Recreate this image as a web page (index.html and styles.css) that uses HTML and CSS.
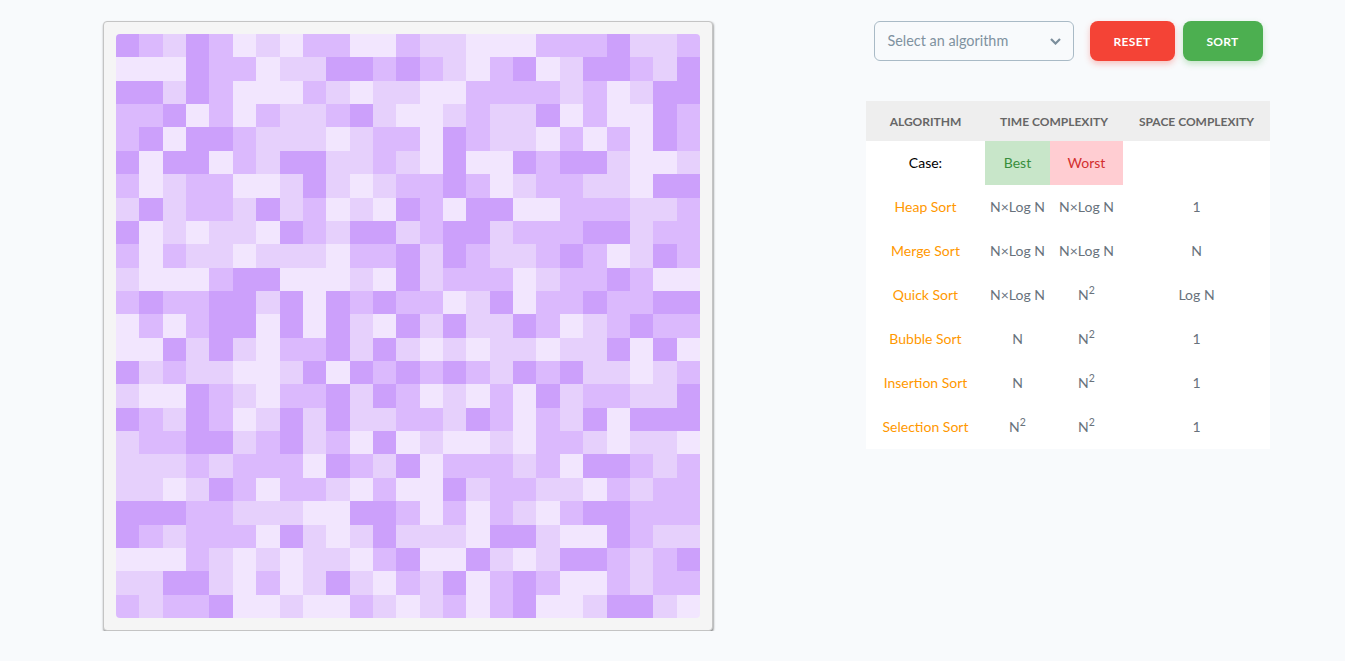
FILE: index.html
```html
<!DOCTYPE html>
<html lang="en">
<head>
  <meta charset="UTF-8" />
  <meta name="viewport" content="width=device-width, initial-scale=1.0" />
  <title>Sorting Visualizer</title>
  <link rel="stylesheet" href="styles.css">
</head>
<body>
  <div class="page">
    <div class="board">
      <div class="grid" id="grid"></div>
    </div>

    <div class="side">
      <div class="controls">
        <div class="select">
          <span>Select an algorithm</span>
          <svg class="select-arrow" width="11" height="7" viewBox="0 0 11 7" fill="none">
            <path d="M1 1 L5.5 5.5 L10 1" stroke="#7b8e9c" stroke-width="2.2" />
          </svg>
        </div>
        <button class="btn btn-reset" type="button">Reset</button>
        <button class="btn btn-sort" type="button">Sort</button>
      </div>

      <table class="info">
        <colgroup>
          <col class="col-name">
          <col class="col-best">
          <col class="col-worst">
          <col class="col-space">
        </colgroup>
        <thead>
          <tr>
            <th>Algorithm</th>
            <th colspan="2">Time Complexity</th>
            <th>Space Complexity</th>
          </tr>
        </thead>
        <tbody>
          <tr>
            <td class="case">Case:</td>
            <td class="best">Best</td>
            <td class="worst">Worst</td>
            <td></td>
          </tr>
          <tr>
            <td class="name">Heap Sort</td>
            <td>N×Log N</td>
            <td>N×Log N</td>
            <td>1</td>
          </tr>
          <tr>
            <td class="name">Merge Sort</td>
            <td>N×Log N</td>
            <td>N×Log N</td>
            <td>N</td>
          </tr>
          <tr>
            <td class="name">Quick Sort</td>
            <td>N×Log N</td>
            <td>N<sup>2</sup></td>
            <td>Log N</td>
          </tr>
          <tr>
            <td class="name">Bubble Sort</td>
            <td>N</td>
            <td>N<sup>2</sup></td>
            <td>1</td>
          </tr>
          <tr>
            <td class="name">Insertion Sort</td>
            <td>N</td>
            <td>N<sup>2</sup></td>
            <td>1</td>
          </tr>
          <tr>
            <td class="name">Selection Sort</td>
            <td>N<sup>2</sup></td>
            <td>N<sup>2</sup></td>
            <td>1</td>
          </tr>
        </tbody>
      </table>
    </div>
  </div>

  <script src="script.js"></script>
</body>
</html>
```

FILE: styles.css
```css
body {
  font-family: 'Lato', sans-serif;
  background-color: #f8fafc;
  margin: 0;
}
.page {
  display: flex;
  justify-content: space-between;
  align-items: flex-start;
  padding: 21px 75px 0 103px;
}
.board {
  background-color: #f5f5f5;
  border: 1px solid #c4c4c4;
  border-radius: 4px;
  box-shadow: 1px 1px 2px rgba(0, 0, 0, 0.25), 0 2px 2px rgba(0, 0, 0, 0.25);
  padding: 12px;
}
.grid {
  display: grid;
  grid-template-columns: repeat(25, 1fr);
  grid-template-rows: repeat(25, 1fr);
  width: 584px;
  height: 584px;
  border-radius: 4px;
  overflow: hidden;
}
.cell-d { background-color: #cca0fb; }
.cell-m { background-color: #dbb9fd; }
.cell-l { background-color: #e6d0fc; }
.cell-w { background-color: #f2e6fe; }

.side {
  display: flex;
  flex-direction: column;
  align-items: center;
  gap: 40px;
  width: 404px;
}
.controls {
  display: flex;
  align-items: center;
}
.select {
  display: flex;
  justify-content: space-between;
  align-items: center;
  box-sizing: border-box;
  width: 200px;
  height: 40px;
  padding: 0 12px 2px 13px;
  margin-right: 16px;
  border: 1px solid #a9bac6;
  border-radius: 6px;
  color: #7f92a0;
  font-size: 14.4px;
}
.select-arrow {
  margin-top: 3px;
}
.btn {
  height: 40px;
  border: none;
  border-radius: 8px;
  color: white;
  font-family: inherit;
  font-size: 12px;
  font-weight: bold;
  letter-spacing: 0.3px;
  text-transform: uppercase;
  cursor: pointer;
}
.btn-reset {
  width: 85px;
  margin-right: 8px;
  background-color: #f44336;
  box-shadow: 0 3px 6px rgba(244, 67, 54, 0.3);
}
.btn-sort {
  width: 80px;
  background-color: #4caf50;
  box-shadow: 0 3px 6px rgba(76, 175, 80, 0.3);
}
.info {
  width: 404px;
  table-layout: fixed;
  border-collapse: collapse;
  background-color: white;
  font-size: 14px;
  color: #68727c;
}
.info th {
  height: 40px;
  padding: 0;
  background-color: #eeeeee;
  color: #666666;
  font-size: 12px;
  font-weight: bold;
  text-transform: uppercase;
}
.info td {
  height: 42px;
  padding: 0 0 2px;
  text-align: center;
}
.col-name { width: 119px; }
.col-best { width: 65px; }
.col-worst { width: 73px; }
.col-space { width: 147px; }
.info sup { font-size: 10.5px; line-height: 0; }
.info .case { color: black; }
.info .best { background-color: #c8e6c9; color: #388e3c; }
.info .worst { background-color: #ffcdd2; color: #d32f2f; }
.info .name { color: #ff9800; }
```

FILE: script.js
```js
// one string per row: d, m, l, w are the four shades
const rows = [
  'dmldmwlwmmwwmllwwwmmmdllm',
  'wwwdmmwllddmdmlwmdwlddmld',
  'ddldmwwwmlwllwwmmmmlmwldd',
  'mmdwmwmllmdlwwlmlldwmwwdm',
  'mdwddmlllwlmmwdmllwmwmwdm',
  'dwddwmlddllmlwdwwdmddlwwl',
  'mwlmmwwldlwlmmdmwlmmllwdd',
  'ldlmmldlmwlwdmwddwwmmmllm',
  'dwlwllwdmlddlmddlmmmddlmm',
  'mwmllwlllwmmdldmllmdmwldm',
  'lwwwmddwwwlwdlmmmwlmmdmww',
  'mdmmddldwdmdmmwldwmmdmmdd',
  'wmwmddwdwdlwdldlldmwlmdmm',
  'wwdldlwmmdldlwlwllwlldwdw',
  'dlmllwwldwdmdmdmldmdllwlm',
  'lwwdmlwmmdldmwlwmwdlmmlld',
  'dmldmwldldllmmldmwmldwddd',
  'lmmddlmdlmwdwlwwlwmmlwllw',
  'lllmlmmmwdmldwmmmlmwddmlm',
  'llwldmwmmlwmwwdlmmllwmlmm',
  'dddmmlllwwddmwmwmlwmddmmm',
  'dmlmmmwdlwldlllwddlwwdmll',
  'wwwmlwlwllwmdwwdlwlddmlmd',
  'llddlwmwldlwmldwmdmwwmlmm',
  'mlmmdwwlwwmlwlmwmdwwlddlw'
];

const grid = document.getElementById('grid');
rows.forEach(row => {
  for (const shade of row) {
    const cell = document.createElement('div');
    cell.className = 'cell-' + shade;
    grid.appendChild(cell);
  }
});
```
